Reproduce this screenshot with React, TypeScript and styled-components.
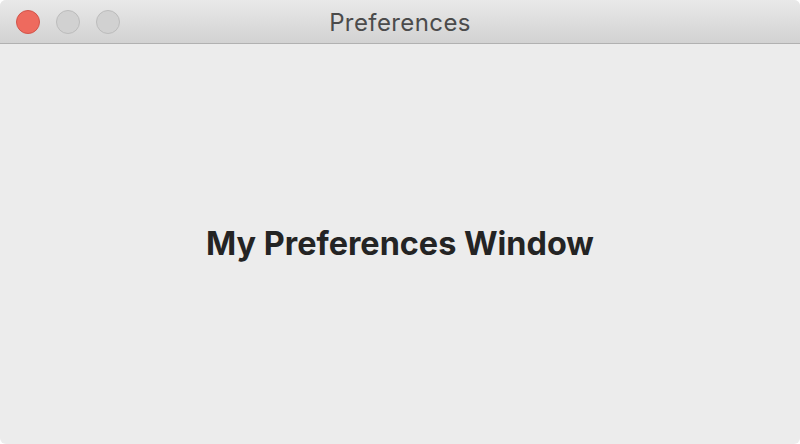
import React from 'react';
import styled, { createGlobalStyle } from 'styled-components';

const GlobalStyle = createGlobalStyle`
  html, body {
    margin: 0;
    padding: 0;
    background: #ffffff;
  }
  #root {
    width: 800px;
    height: 444px;
  }
`;

const Window = styled.div`
  width: 800px;
  height: 444px;
  display: flex;
  flex-direction: column;
  border-radius: 6px;
  overflow: hidden;
  background: #ececec;
  font-family: Inter, 'Noto Sans', 'Liberation Sans', sans-serif;
`;

const TitleBar = styled.div`
  position: relative;
  height: 43px;
  flex: none;
  display: flex;
  align-items: center;
  justify-content: center;
  background: linear-gradient(#e9e9e9, #d2d2d2);
  border-bottom: 1px solid #b1b1b1;
  box-sizing: content-box;
`;

const Lights = styled.div`
  position: absolute;
  left: 16px;
  top: 10px;
  display: flex;
  gap: 16px;
`;

const Light = styled.span<{ color: string; edge: string }>`
  width: 24px;
  height: 24px;
  border-radius: 50%;
  background: ${({ color }) => color};
  border: 1px solid ${({ edge }) => edge};
  box-sizing: border-box;
`;

const Title = styled.div`
  font-size: 24px;
  color: #4b4b4b;
  letter-spacing: 0.4px;
  margin-top: 1px;
`;

const Content = styled.div`
  flex: 1;
  display: flex;
  align-items: center;
  justify-content: center;
  padding-bottom: 2px;
`;

const Heading = styled.h1`
  margin: 0;
  font-size: 32.4px;
  font-weight: 700;
  color: #242424;
`;

export default function App() {
  return (
    <>
      <GlobalStyle />
      <Window>
        <TitleBar>
          <Lights>
            <Light color="#ee6a5e" edge="#d2544a" />
            <Light color="#d1d1d1" edge="#bcbcbc" />
            <Light color="#d1d1d1" edge="#bcbcbc" />
          </Lights>
          <Title>Preferences</Title>
        </TitleBar>
        <Content>
          <Heading>My Preferences Window</Heading>
        </Content>
      </Window>
    </>
  );
}
